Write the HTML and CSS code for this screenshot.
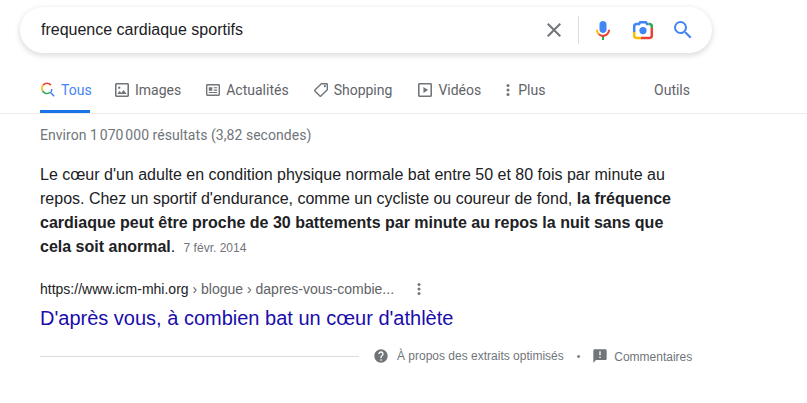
FILE: index.html
```html
<!DOCTYPE html>
<html lang="fr">
<head>
<meta charset="utf-8">
<title>frequence cardiaque sportifs</title>
<link rel="stylesheet" href="styles.css">
</head>
<body>
<header class="search-wrap">
  <div class="search">
    <div class="query">frequence cardiaque sportifs</div>
    <svg class="ic-clear" viewBox="0 0 24 24" width="24" height="24"><path fill="#70757a" d="M19 6.41 17.59 5 12 10.59 6.41 5 5 6.41 10.59 12 5 17.59 6.41 19 12 13.41 17.59 19 19 17.59 13.41 12z"/></svg>
    <span class="divider"></span>
    <svg class="ic-mic" viewBox="0 0 24 24" width="24" height="24">
      <path fill="#4285f4" d="M12 15c1.66 0 3.500-1.310 3.500-2.970V5.970C15.500 4.310 13.660 3 12 3S8.500 4.310 8.500 5.970v6.060C8.500 13.690 10.340 15 12 15z"/>
      <path fill="#34a853" d="M11 18.100h2V22h-2z"/>
      <path fill="#fbbc04" d="M7.050 16.870c-1.270-1.330-2.050-3.120-2.050-5.090h2c0 1.450.56 2.760 1.470 3.750l-1.420 1.340z"/>
      <path fill="#ea4335" d="M12 16.800c-1.400 0-2.690-.6-3.530-1.270l-1.420 1.340C8.300 18.100 10.100 18.900 12 18.900c3.870 0 7-3.130 7-7.120h-2c0 2.760-2.240 5.020-5 5.020z"/>
    </svg>
    <svg class="ic-lens" viewBox="0 0 24 24" width="24" height="24">
      <circle cx="12" cy="12.600" r="3.600" fill="#4285f4"/>
      <path fill="none" stroke="#4285f4" stroke-width="2.500" d="M3.200 14V8.500C3.200 7 4.200 6 5.700 6H8l1.200-1.800h5.600L16 6h1.500"/>
      <path fill="none" stroke="#34a853" stroke-width="2.500" d="M17.500 6h.8c1.500 0 2.500 1 2.500 2.500V10"/>
      <path fill="none" stroke="#ea4335" stroke-width="2.500" d="M20.800 10v7.500c0 1.500-1 2.500-2.500 2.500H10"/>
      <path fill="none" stroke="#fbbc04" stroke-width="2.500" d="M10 20H5.700c-1.500 0-2.500-1-2.500-2.500V14"/>
    </svg>
    <svg class="ic-search" viewBox="0 0 24 24" width="24" height="24"><path fill="#4285f4" d="M15.500 14h-.79l-.28-.27A6.470 6.470 0 0 0 16 9.500 6.500 6.500 0 1 0 9.500 16c1.610 0 3.090-.59 4.230-1.570l.27.28v.79l5 4.990L20.490 19l-4.990-5zm-6 0C7.010 14 5 11.990 5 9.500S7.010 5 9.500 5 14 7.010 14 9.500 11.990 14 9.500 14z"/></svg>
  </div>
</header>

<nav class="tabs">
  <a class="tab tab-active">
    <svg viewBox="0 0 16 16" width="16" height="16" class="tab-ic">
      <path fill="none" stroke="#4285f4" stroke-width="1.500" d="M10.300 10.300 14.200 14.200"/>
      <path fill="none" stroke="#4285f4" stroke-width="1.500" d="M11 10A4.800 4.800 0 0 0 11.600 7"/>
      <path fill="none" stroke="#ea4335" stroke-width="1.500" d="M3 3.300A5 5 0 0 1 11 3.300"/>
      <path fill="none" stroke="#fbbc04" stroke-width="1.500" d="M3 3.300A5 5 0 0 0 2.400 8.600"/>
      <path fill="none" stroke="#34a853" stroke-width="1.500" d="M2.400 8.600A5 5 0 0 0 10.300 10.300"/>
    </svg>
    Tous
  </a>
  <a class="tab">
    <svg viewBox="3 3 18 18" width="14" height="14" class="tab-ic"><path fill="#70757a" d="M19 3H5c-1.100 0-2 .9-2 2v14c0 1.100.9 2 2 2h14c1.100 0 2-.9 2-2V5c0-1.100-.9-2-2-2zm0 16H5V5h14v14zm-5-7-3 3.700L9 13l-3 4h12l-4-5zM8.500 10.500a1.500 1.500 0 1 0 0-3 1.500 1.500 0 0 0 0 3z"/></svg>
    Images
  </a>
  <a class="tab">
    <svg viewBox="2 3.500 20 17" width="14" height="12" class="tab-ic"><path fill="#70757a" d="M20 3.500H4c-1.100 0-2 .9-2 2v13c0 1.100.9 2 2 2h16c1.100 0 2-.9 2-2v-13c0-1.100-.9-2-2-2zm0 15H4v-13h16v13zM6 8h5v5H6V8zm7 0h5v1.600h-5V8zm0 3.300h5v1.600h-5v-1.600zM6 14.800h12v1.600H6v-1.600z"/></svg>
    Actualités
  </a>
  <a class="tab tab-shop">
    <svg viewBox="2 2 20 20" width="14" height="14" class="tab-ic"><path fill="#70757a" d="M21.410 11.410 12.580 2.580A2 2 0 0 0 11.170 2H4a2 2 0 0 0-2 2v7.170c0 .53.21 1.040.59 1.410l8.830 8.830a2 2 0 0 0 2.830 0l7.170-7.170a2 2 0 0 0 0-2.830zM12.830 20 4 11.170V4h7.170L20 12.830 12.830 20zM6.500 8a1.500 1.500 0 1 0 0-3 1.500 1.500 0 0 0 0 3z" transform="matrix(-1 0 0 1 24 0)"/></svg>
    Shopping
  </a>
  <a class="tab">
    <svg viewBox="3 3 18 18" width="14" height="14" class="tab-ic"><path fill="#70757a" d="M19 3H5c-1.100 0-2 .9-2 2v14c0 1.100.9 2 2 2h14c1.100 0 2-.9 2-2V5c0-1.100-.9-2-2-2zm0 16H5V5h14v14zM10 8v8l6-4-6-4z"/></svg>
    Vidéos
  </a>
  <a class="tab tab-more">
    <svg viewBox="6 0 4 16" width="4" height="16" class="tab-ic"><g fill="#70757a"><circle cx="8" cy="3.500" r="1.500"/><circle cx="8" cy="8" r="1.500"/><circle cx="8" cy="12.500" r="1.500"/></g></svg>
    Plus
  </a>
  <a class="tab tab-tools">Outils</a>
</nav>

<main class="content">
  <div class="stats">Environ 1&#8239;070&#8239;000 résultats (3,82 secondes)</div>
  <p class="snippet">Le cœur d'un adulte en condition physique normale bat entre 50 et 80 fois par minute au repos. Chez un sportif d'endurance, comme un cycliste ou coureur de fond, <b>la fréquence cardiaque peut être proche de 30 battements par minute au repos la nuit sans que cela soit anormal</b>. <span class="date">7 févr. 2014</span></p>
  <div class="cite-row">
    <span class="cite">https://www.icm-mhi.org <span class="crumbs">› blogue › dapres-vous-combie...</span></span>
    <svg class="cite-more" viewBox="0 0 16 16" width="16" height="16"><g fill="#70757a"><circle cx="8" cy="3.500" r="1.500"/><circle cx="8" cy="8" r="1.500"/><circle cx="8" cy="12.500" r="1.500"/></g></svg>
  </div>
  <a class="title">D'après vous, à combien bat un cœur d'athlète</a>
  <div class="foot">
    <span class="rule"></span>
    <svg viewBox="0 0 24 24" width="16" height="16" class="foot-ic"><path fill="#70757a" d="M12 2C6.480 2 2 6.480 2 12s4.480 10 10 10 10-4.480 10-10S17.520 2 12 2zm1 17h-2v-2h2v2zm2.070-7.750-.9.920C13.450 12.900 13 13.500 13 15h-2v-.5c0-1.100.45-2.100 1.170-2.830l1.240-1.260c.37-.36.590-.86.590-1.410 0-1.100-.9-2-2-2s-2 .9-2 2H8c0-2.210 1.790-4 4-4s4 1.790 4 4c0 .88-.36 1.680-.93 2.250z"/></svg>
    <span class="foot-text about">À propos des extraits optimisés</span>
    <span class="dot">•</span>
    <svg viewBox="0 0 24 24" width="16" height="16" class="foot-ic"><path fill="#70757a" d="M20 2H4c-1.100 0-2 .9-2 2v18l4-4h14c1.100 0 2-.9 2-2V4c0-1.100-.9-2-2-2zm-7 9h-2V5h2v6zm0 4h-2v-2h2v2z"/></svg>
    <span class="foot-text comments">Commentaires</span>
  </div>
</main>
</body>
</html>
```
FILE: styles.css
```css
* { box-sizing: border-box; }
html, body { margin: 0; padding: 0; background: #fff; }
body { width: 807px; height: 403px; overflow: hidden; font-family: "Liberation Sans", Arial, sans-serif; color: #202124; }

.search-wrap { padding: 7px 95px 0 20px; }
.search {
  height: 46px;
  border-radius: 23px;
  background: #fff;
  box-shadow: 0 2px 5px 1px rgba(64,60,67,.16);
  display: flex;
  align-items: center;
  padding-left: 21px;
  padding-right: 17px;
}
.query { flex: 1; font-size: 16px; color: #202124; }
.divider { width: 1px; height: 28px; background: #dadce0; margin: 0 12px 0 12px; }
.ic-mic { margin-right: 16px; }
.ic-lens { margin-right: 16px; }

.tabs {
  margin-top: 14px;
  height: 47px;
  padding-left: 40px;
  border-bottom: 1px solid #ebebeb;
  display: flex;
  font-family: Roboto, sans-serif;
  font-size: 14px;
  color: #5f6368;
}
.tab { display: flex; align-items: center; height: 46px; margin-right: 25px; gap: 6px; }
.tab-ic { flex: none; }
.tab-active { color: #4285f4; width: 50px; border-bottom: 3px solid #1a73e8; padding-top: 3px; gap: 5px; }
.tab-shop { margin-right: 26px; }
.tab-more { gap: 8px; margin-right: 0; }
.tab-tools { margin-left: auto; margin-right: 117px; }

.content { padding-left: 40px; width: 760px; }
.stats { font-family: Roboto, sans-serif; font-size: 14px; letter-spacing: .05px; color: #70757a; margin-top: 13px; line-height: 17px; }
.snippet { margin: 19px 0 0; width: 640px; font-size: 16px; line-height: 24px; color: #202124; }
.date { font-size: 12px; color: #70757a; margin-left: 4px; }
.cite-row { margin-top: 18px; height: 22px; display: flex; align-items: center; font-size: 14px; }
.cite { color: #202124; }
.crumbs { color: #5f6368; }
.cite-more { margin-left: 17px; }
.title { display: block; font-size: 20px; line-height: 26px; color: #1a0dab; margin-top: 5px; }
.foot { display: flex; align-items: center; margin-top: 15px; height: 20px; font-size: 12px; color: #70757a; white-space: nowrap; }
.rule { flex: none; width: 319px; height: 1px; background: #dadce0; margin-right: 14px; }
.foot-ic { flex: none; }
.about { margin-left: 8px; }
.dot { margin: 0 12px 0 13px; font-size: 10px; }
.comments { margin-left: 6px; padding-top: 2px; }
```
